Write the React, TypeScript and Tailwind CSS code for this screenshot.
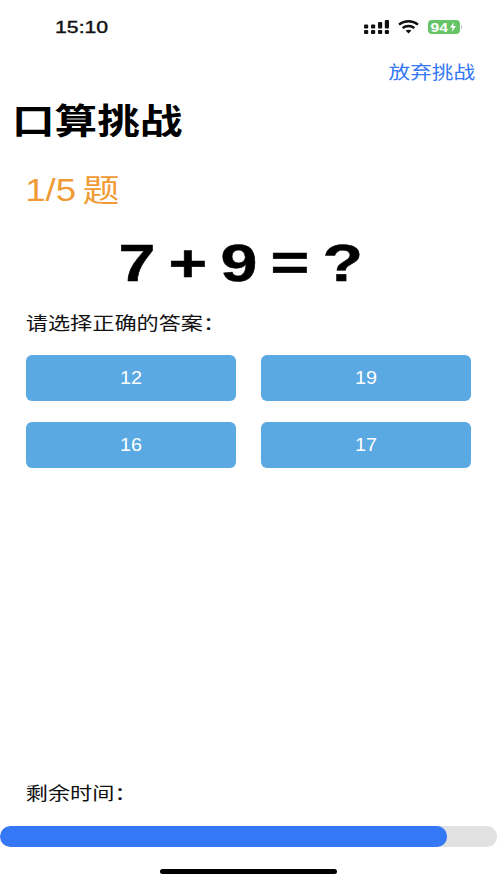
const font = 'font-["Liberation_Sans","Noto_Sans_CJK_SC",sans-serif]'

function StatusBar() {
	return (
		<div className="flex h-[54px] items-start justify-between pl-[55px] pr-[35px] pt-[18px]">
			<span className="origin-left scale-x-[1.25] text-[17px] leading-[20px] text-[#111] [-webkit-text-stroke:0.4px_#111]">15:10</span>
			<div className="flex items-center gap-[9px] pt-[2px]">
				<svg width="25" height="14" viewBox="0 0 25 14" fill="#111">
					<rect x="0" y="4.5" width="4.2" height="4" rx="1" />
					<rect x="0" y="10" width="4.2" height="4" rx="1" />
					<rect x="7" y="4.5" width="4.2" height="4" rx="1" />
					<rect x="7" y="10" width="4.2" height="4" rx="1" />
					<rect x="14" y="2" width="4.2" height="6.5" rx="1" />
					<rect x="14" y="10" width="4.2" height="4" rx="1" />
					<rect x="20.8" y="0" width="4.2" height="8.5" rx="1" />
					<rect x="20.8" y="10" width="4.2" height="4" rx="1" />
				</svg>
				<svg width="21" height="14" viewBox="0 0 21 14" fill="none" stroke="#111" strokeWidth="2.4">
					<path d="M1 4.6C6.5 0.2 14.5 0.2 20 4.6" />
					<path d="M4.6 8C8 5.4 13 5.4 16.4 8" />
					<path d="M10.5 13.5L7.6 10.6C9.3 9.6 11.7 9.6 13.4 10.6Z" fill="#111" stroke="none" />
				</svg>
				<div className="flex items-center gap-[1px]">
					<div className="flex h-[14px] w-[32px] items-center justify-center rounded-[4px] bg-[#65C466] text-[13px] leading-none font-bold text-white">
						<span className="scale-x-[1.2]">94</span>
						<svg className="ml-[3px]" width="6" height="10" viewBox="0 0 6 10" fill="#fff">
							<path d="M3.8 0L0 5.6H2.6L1.8 10L6 4H3.2Z" />
						</svg>
					</div>
					<div className="h-[4px] w-[1px] rounded-r bg-[#bbb]" />
				</div>
			</div>
		</div>
	)
}

function Choice({ label }: { label: string }) {
	return (
		<button className="flex h-[46px] items-center justify-center rounded-[6px] bg-[#5AA9E2] text-[18px] text-white">
			<span className="scale-x-[1.1]">{label}</span>
		</button>
	)
}

export default function App() {
	return (
		<div className={`flex h-[883px] w-[497px] flex-col overflow-hidden bg-white ${font}`}>
			<StatusBar />
			<div className="flex h-[36px] items-center justify-end pr-[22px] pt-[2px]">
				<span className="origin-right scale-x-[1.2] text-[18px] text-[#3478F6]">放弃挑战</span>
			</div>
			<h1 className="mt-[8px] h-[48px] origin-left scale-x-[1.2] pl-[10px] text-[35.5px] leading-[48px] font-bold text-black">口算挑战</h1>
			<div className="mt-[24px] h-[40px] origin-left scale-x-[1.2] pl-[21px] text-[30.5px] leading-[40px] text-[#F09A35] [word-spacing:-3px]">1/5 题</div>
			<div className="mt-[21px] h-[66px] scale-x-[1.3] pr-[12px] text-center text-[51px] leading-[66px] font-bold text-black [word-spacing:-4px] [-webkit-text-stroke:0.5px_black]">7 + 9 = ?</div>
			<div className="mt-[14px] h-[26px] origin-left scale-x-[1.23] pl-[21px] text-[18px] leading-[26px] text-[#111]">请选择正确的答案：</div>
			<div className="mt-[18px] grid grid-cols-2 gap-x-[25px] gap-y-[21px] pl-[26px] pr-[26px]">
				<Choice label="12" />
				<Choice label="19" />
				<Choice label="16" />
				<Choice label="17" />
			</div>
			<div className="mt-auto h-[26px] origin-left scale-x-[1.23] pl-[21px] text-[18px] leading-[26px] text-[#111]">剩余时间：</div>
			<div className="mt-[19px] h-[21px] overflow-hidden rounded-[10px] bg-[#E1E1E1]">
				<div className="h-full w-[447px] rounded-[10px] bg-[#3478F6]" />
			</div>
			<div className="flex h-[36px] justify-center pt-[22px]">
				<div className="h-[5px] w-[177px] rounded-full bg-black" />
			</div>
		</div>
	)
}
